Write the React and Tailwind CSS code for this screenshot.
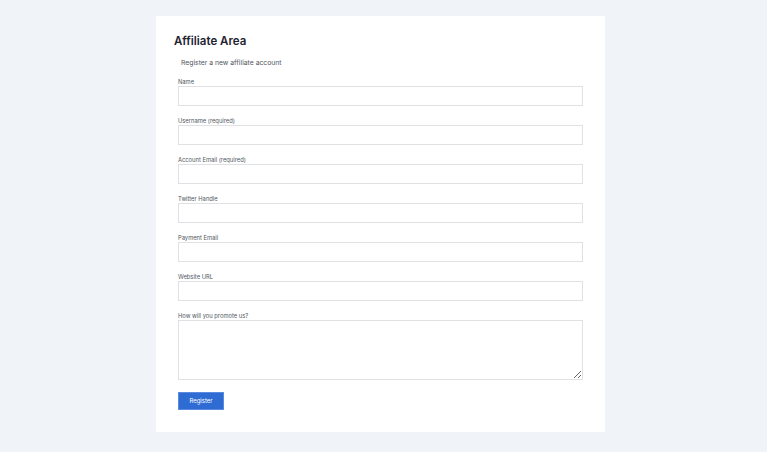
import React from 'react';

const fields = [
  'Name',
  'Username (required)',
  'Account Email (required)',
  'Twitter Handle',
  'Payment Email',
  'Website URL',
];

export default function App() {
  return (
    <div className="min-h-screen bg-[#f0f3f8] pt-[16px] pl-[156px] font-['Inter',sans-serif]">
      <div className="w-[449px] h-[416px] bg-white pl-[18px] pr-[22px] pt-[17px]">
        <h1 className="text-[11.5px] leading-[17px] font-semibold text-[#1e2330]">Affiliate Area</h1>
        <p className="mt-[7px] pl-[7px] text-[6.8px] leading-[12px] text-[#50575e]">Register a new affiliate account</p>

        <form className="pl-[4px] mt-[7px] flex flex-col gap-[9px]" onSubmit={(e) => e.preventDefault()}>
          {fields.map((f) => (
            <div key={f} className="flex flex-col">
              <label className="text-[5.8px] leading-[9px] pt-[1px] text-[#50575e]">{f}</label>
              <input type="text" className="h-[20px] w-full border border-[#e0e1e4] bg-white outline-none" />
            </div>
          ))}
          <div className="flex flex-col">
            <label className="text-[5.8px] leading-[9px] pt-[1px] text-[#50575e]">How will you promote us?</label>
            <textarea className="h-[60px] w-full border border-[#e0e1e4] bg-white outline-none" />
          </div>
          <div className="mt-[3px] flex">
            <button type="submit" className="block w-[46px] h-[18px] bg-[#2e6bd3] border border-[#5a8be0] text-white text-[6px] leading-[16px]">
              Register
            </button>
          </div>
        </form>
      </div>
    </div>
  );
}
